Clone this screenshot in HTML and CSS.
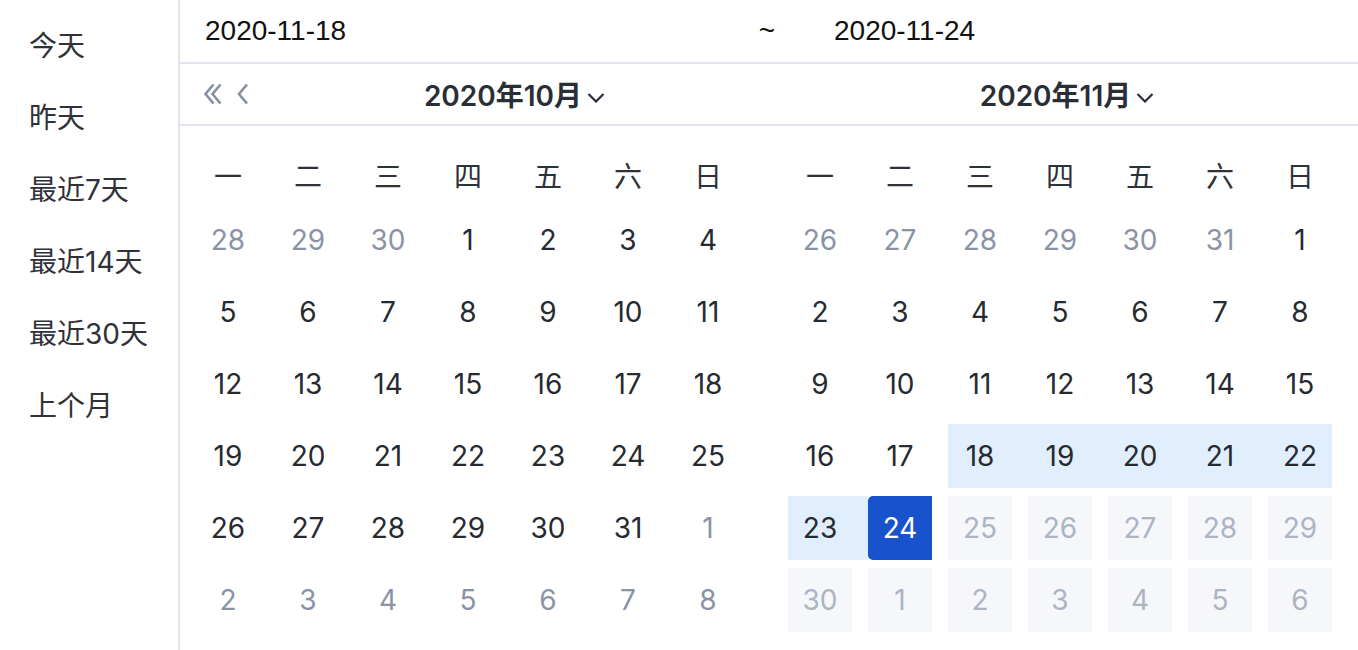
FILE: index.html
```html
<!DOCTYPE html>
<html lang="zh">
<head>
<meta charset="utf-8">
<title>日期范围选择</title>
<link rel="stylesheet" href="styles.css">
</head>
<body>
<div class="picker">
  <aside class="shortcuts">
    <div class="shortcut">今天</div>
    <div class="shortcut">昨天</div>
    <div class="shortcut">最近7天</div>
    <div class="shortcut">最近14天</div>
    <div class="shortcut">最近30天</div>
    <div class="shortcut">上个月</div>
  </aside>
  <main class="main">
    <div class="range-input">
      <div class="date date-a">2020-11-18</div>
      <div class="sep">~</div>
      <div class="date date-b">2020-11-24</div>
    </div>
    <div class="header">
      <div class="head-left">
        <div class="arrows">
          <svg class="dbl" width="20" height="22" viewBox="0 0 20 22"><path d="M10.5 1.5 L2.5 11 L10.5 20.5 M17.5 1.5 L9.5 11 L17.5 20.5" fill="none" stroke="#868fa0" stroke-width="2.6"/></svg>
          <svg class="sgl" width="14" height="22" viewBox="0 0 14 22"><path d="M11 1.5 L3 11 L11 20.5" fill="none" stroke="#868fa0" stroke-width="2.6"/></svg>
        </div>
        <div class="title">2020年10月<svg class="caret" width="18" height="10" viewBox="0 0 18 10"><path d="M1.5 1 L9 8.5 L16.5 1" fill="none" stroke="#2a2e36" stroke-width="2.2"/></svg></div>
      </div>
      <div class="head-right">
        <div class="title">2020年11月<svg class="caret" width="18" height="10" viewBox="0 0 18 10"><path d="M1.5 1 L9 8.5 L16.5 1" fill="none" stroke="#2a2e36" stroke-width="2.2"/></svg></div>
      </div>
    </div>
    <div class="cal-body">
      <section class="month">
        <div class="weekdays"><span>一</span><span>二</span><span>三</span><span>四</span><span>五</span><span>六</span><span>日</span></div>
        <div class="days">
          <div class="cell other"><span>28</span></div><div class="cell other"><span>29</span></div><div class="cell other"><span>30</span></div><div class="cell"><span>1</span></div><div class="cell"><span>2</span></div><div class="cell"><span>3</span></div><div class="cell"><span>4</span></div>
          <div class="cell"><span>5</span></div><div class="cell"><span>6</span></div><div class="cell"><span>7</span></div><div class="cell"><span>8</span></div><div class="cell"><span>9</span></div><div class="cell"><span>10</span></div><div class="cell"><span>11</span></div>
          <div class="cell"><span>12</span></div><div class="cell"><span>13</span></div><div class="cell"><span>14</span></div><div class="cell"><span>15</span></div><div class="cell"><span>16</span></div><div class="cell"><span>17</span></div><div class="cell"><span>18</span></div>
          <div class="cell"><span>19</span></div><div class="cell"><span>20</span></div><div class="cell"><span>21</span></div><div class="cell"><span>22</span></div><div class="cell"><span>23</span></div><div class="cell"><span>24</span></div><div class="cell"><span>25</span></div>
          <div class="cell"><span>26</span></div><div class="cell"><span>27</span></div><div class="cell"><span>28</span></div><div class="cell"><span>29</span></div><div class="cell"><span>30</span></div><div class="cell"><span>31</span></div><div class="cell other"><span>1</span></div>
          <div class="cell other"><span>2</span></div><div class="cell other"><span>3</span></div><div class="cell other"><span>4</span></div><div class="cell other"><span>5</span></div><div class="cell other"><span>6</span></div><div class="cell other"><span>7</span></div><div class="cell other"><span>8</span></div>
        </div>
      </section>
      <section class="month">
        <div class="weekdays"><span>一</span><span>二</span><span>三</span><span>四</span><span>五</span><span>六</span><span>日</span></div>
        <div class="days">
          <div class="cell other"><span>26</span></div><div class="cell other"><span>27</span></div><div class="cell other"><span>28</span></div><div class="cell other"><span>29</span></div><div class="cell other"><span>30</span></div><div class="cell other"><span>31</span></div><div class="cell"><span>1</span></div>
          <div class="cell"><span>2</span></div><div class="cell"><span>3</span></div><div class="cell"><span>4</span></div><div class="cell"><span>5</span></div><div class="cell"><span>6</span></div><div class="cell"><span>7</span></div><div class="cell"><span>8</span></div>
          <div class="cell"><span>9</span></div><div class="cell"><span>10</span></div><div class="cell"><span>11</span></div><div class="cell"><span>12</span></div><div class="cell"><span>13</span></div><div class="cell"><span>14</span></div><div class="cell"><span>15</span></div>
          <div class="cell"><span>16</span></div><div class="cell"><span>17</span></div><div class="cell range"><span>18</span></div><div class="cell range"><span>19</span></div><div class="cell range"><span>20</span></div><div class="cell range"><span>21</span></div><div class="cell range-last"><span>22</span></div>
          <div class="cell range"><span>23</span></div><div class="cell selected"><span>24</span></div><div class="cell disabled"><span>25</span></div><div class="cell disabled"><span>26</span></div><div class="cell disabled"><span>27</span></div><div class="cell disabled"><span>28</span></div><div class="cell disabled"><span>29</span></div>
          <div class="cell disabled"><span>30</span></div><div class="cell disabled"><span>1</span></div><div class="cell disabled"><span>2</span></div><div class="cell disabled"><span>3</span></div><div class="cell disabled"><span>4</span></div><div class="cell disabled"><span>5</span></div><div class="cell disabled"><span>6</span></div>
        </div>
      </section>
    </div>
  </main>
</div>
</body>
</html>
```

FILE: styles.css
```css
* { box-sizing: border-box; }
html, body { margin: 0; padding: 0; background: #fff; }
body {
  font-family: "Inter", "Noto Sans CJK SC", sans-serif;
  font-size: 28px;
  color: #262a31;
}
.picker {
  display: flex;
  width: 1358px;
  height: 650px;
  overflow: hidden;
}
.shortcuts {
  width: 180px;
  flex: 0 0 180px;
  border-right: 2px solid #e1e4ef;
  padding-top: 10px;
  padding-left: 29px;
}
.shortcut {
  height: 72px;
  line-height: 72px;
  color: #2f3238;
  white-space: nowrap;
}
.main { flex: 1; min-width: 0; }
.range-input {
  display: flex;
  align-items: center;
  height: 64px;
  border-bottom: 2px solid #e1e4ef;
  padding-left: 25px;
  font-family: "Liberation Sans", Arial, sans-serif;
  color: #111;
}
.date-a { width: 540px; }
.sep { width: 44px; text-align: center; }
.date-b { margin-left: 45px; }
.header {
  display: flex;
  height: 62px;
  border-bottom: 2px solid #e1e4ef;
}
.head-left {
  width: 596px;
  display: flex;
  align-items: center;
  padding-left: 23px;
}
.arrows {
  width: 50px;
  display: flex;
  align-items: center;
  gap: 13px;
}
.arrows svg { display: block; }
.head-left .title { flex: 1; }
.head-right {
  flex: 1;
  display: flex;
  align-items: center;
}
.head-right .title { flex: 1; }
.title {
  display: flex;
  justify-content: center;
  align-items: center;
  font-weight: 600;
  color: #2a2e36;
  gap: 5px;
}
.caret { display: block; margin-top: 8px; }
.cal-body {
  display: flex;
  gap: 32px;
  padding: 23px 0 0 16px;
}
.month { width: 560px; }
.weekdays {
  display: grid;
  grid-template-columns: repeat(7, 80px);
  height: 56px;
  margin-bottom: 3px;
}
.weekdays span {
  width: 64px;
  text-align: center;
  line-height: 56px;
  color: #2f3238;
}
.days {
  display: grid;
  grid-template-columns: repeat(7, 80px);
  grid-auto-rows: 64px;
  row-gap: 8px;
}
.cell { display: flex; }
.cell span {
  width: 64px;
  height: 64px;
  display: flex;
  align-items: center;
  justify-content: center;
}
.cell.other span { color: #8a93a5; }
.cell.range { background: #e1eefd; }
.cell.range-last span { background: #e1eefd; }
.cell.selected span {
  background: #1852cc;
  color: #fff;
  border-radius: 5px 0 0 5px;
}
.cell.disabled span {
  background: #f5f7fb;
  color: #acb4c2;
}
```
